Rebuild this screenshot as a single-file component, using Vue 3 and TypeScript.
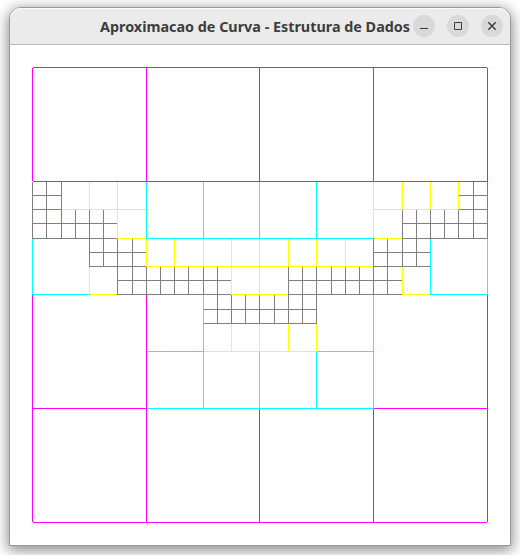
<script setup lang="ts">
type Segment = [number, number, number]

interface Layer {
  name: string
  rows: Segment[] // y, from x, to x
  columns: Segment[] // x, from y, to y
}

const layers: Layer[] = [
  {
    name: 'magenta',
    rows: [[67, 33, 486], [181, 33, 487], [408, 33, 146], [408, 374, 487], [522, 33, 486]],
    columns: [
      [32, 68, 180], [146, 68, 181], [259, 68, 181], [373, 68, 181], [487, 68, 181],
      [32, 295, 521], [146, 295, 521], [259, 409, 521], [373, 409, 521], [487, 295, 521],
    ],
  },
  {
    name: 'cyan',
    rows: [[238, 146, 373], [294, 32, 89], [294, 430, 487], [351, 147, 203], [351, 316, 373], [408, 147, 373]],
    columns: [
      [32, 238, 294], [146, 182, 238], [203, 182, 238], [259, 182, 238], [316, 182, 238],
      [430, 239, 294], [487, 238, 294], [203, 295, 408], [259, 352, 408], [316, 352, 408], [373, 295, 408],
    ],
  },
  {
    name: 'yellow',
    rows: [
      [209, 61, 145], [209, 373, 458], [238, 117, 145], [238, 374, 402], [266, 146, 373],
      [294, 89, 117], [294, 231, 288], [294, 402, 429], [351, 204, 316],
    ],
    columns: [
      [89, 182, 209], [117, 182, 238], [373, 182, 237], [402, 182, 209], [430, 182, 209], [458, 182, 209],
      [146, 239, 266], [174, 239, 266], [203, 239, 266], [231, 239, 294], [259, 239, 294],
      [288, 239, 266], [316, 239, 266], [345, 239, 266], [89, 266, 294], [402, 266, 294],
      [231, 323, 351], [259, 323, 351], [288, 323, 351], [316, 323, 351],
    ],
  },
  {
    name: 'gray',
    rows: [
      [195, 32, 61], [195, 459, 487], [209, 32, 60], [209, 459, 487], [223, 32, 116], [223, 402, 487],
      [238, 32, 116], [238, 403, 487], [252, 89, 145], [252, 373, 429], [266, 89, 145], [266, 373, 429],
      [280, 117, 230], [280, 288, 401], [294, 117, 230], [294, 288, 401], [309, 204, 316], [323, 204, 316],
    ],
    columns: [
      [32, 182, 238], [46, 182, 238], [61, 182, 238], [75, 210, 238], [89, 210, 266], [103, 210, 266],
      [117, 239, 294], [132, 239, 294], [146, 267, 294], [160, 267, 294], [174, 267, 294], [188, 267, 294],
      [203, 267, 294], [217, 267, 323], [231, 295, 323], [245, 295, 323], [259, 295, 322], [274, 295, 323],
      [288, 267, 323], [302, 267, 323], [316, 267, 323], [331, 267, 294], [345, 267, 294], [359, 267, 294],
      [373, 238, 294], [387, 239, 294], [402, 210, 266], [416, 210, 266], [430, 210, 238], [444, 210, 238],
      [458, 210, 238], [473, 182, 238], [487, 182, 238],
    ],
  },
]

// The canvas view box starts at the top left of the client area.
function outline(layer: Layer): string {
  const rows = layer.rows.map(([y, a, b]) => `M${a} ${y + 0.5}H${b + 1}`)
  const columns = layer.columns.map(([x, a, b]) => `M${x + 0.5} ${a}V${b + 1}`)
  return rows.concat(columns).join('')
}
</script>

<template>
  <div class="desktop">
    <main class="window">
      <header class="titlebar">
        <svg class="title" width="312" height="36" viewBox="0 0 312 36">
          <text x="0" y="23.5" textLength="310" lengthAdjust="spacingAndGlyphs">Aproximacao de Curva - Estrutura de Dados</text>
        </svg>
        <div class="controls">
          <button class="control" aria-label="Minimize">
            <svg width="22" height="22" viewBox="0 0 22 22"><path d="M7 13.5H15" /></svg>
          </button>
          <button class="control" aria-label="Maximize">
            <svg width="22" height="22" viewBox="0 0 22 22"><path d="M7.5 7.5H14.5V14.5H7.5Z" /></svg>
          </button>
          <button class="control" aria-label="Close">
            <svg width="22" height="22" viewBox="0 0 22 22"><path class="cross" d="M7.3 7.3L14.7 14.7M14.7 7.3L7.3 14.7" /></svg>
          </button>
        </div>
      </header>
      <svg class="canvas" width="500" height="500" viewBox="10 45 500 500" shape-rendering="crispEdges">
        <path v-for="layer in layers" :key="layer.name" :class="layer.name" :d="outline(layer)" />
      </svg>
    </main>
  </div>
</template>

<style>
body {
  margin: 0;
  background: #fff;
}
</style>

<style scoped>
.desktop {
  box-sizing: border-box;
  width: 520px;
  height: 555px;
  padding: 7px 9px 9px;
  overflow: hidden;
}
.window {
  box-sizing: border-box;
  width: 502px;
  height: 539px;
  border: 1px solid #999;
  border-radius: 12px 12px 0 0;
  background: #fff;
  box-shadow: 0 3px 14px 1px rgba(0, 0, 0, 0.48);
}
.titlebar {
  box-sizing: border-box;
  display: flex;
  align-items: center;
  height: 37px;
  padding: 0 7px 0 90px;
  border-bottom: 1px solid #b8b8b8;
  border-radius: 11px 11px 0 0;
  background: #ebebeb;
  box-shadow: inset 0 1px #fafafa;
}
.title {
  flex: none;
  font: bold 14.5px "Noto Sans", "Open Sans", sans-serif;
  fill: #3d3d3d;
}
.controls {
  display: flex;
  gap: 12px;
  margin-left: 1px;
}
.control {
  display: flex;
  width: 22px;
  height: 22px;
  padding: 0;
  border: 0;
  border-radius: 50%;
  background: #d9d9d9;
}
.control path {
  fill: none;
  stroke: #3d3d3d;
}
.control .cross {
  stroke-width: 1.5;
}
.canvas {
  display: block;
}
.canvas path {
  fill: none;
  stroke-width: 1;
}
.magenta {
  stroke: #f0f;
}
.cyan {
  stroke: #0ff;
}
.yellow {
  stroke: #ff0;
}
.gray {
  stroke: #808080;
}
</style>
